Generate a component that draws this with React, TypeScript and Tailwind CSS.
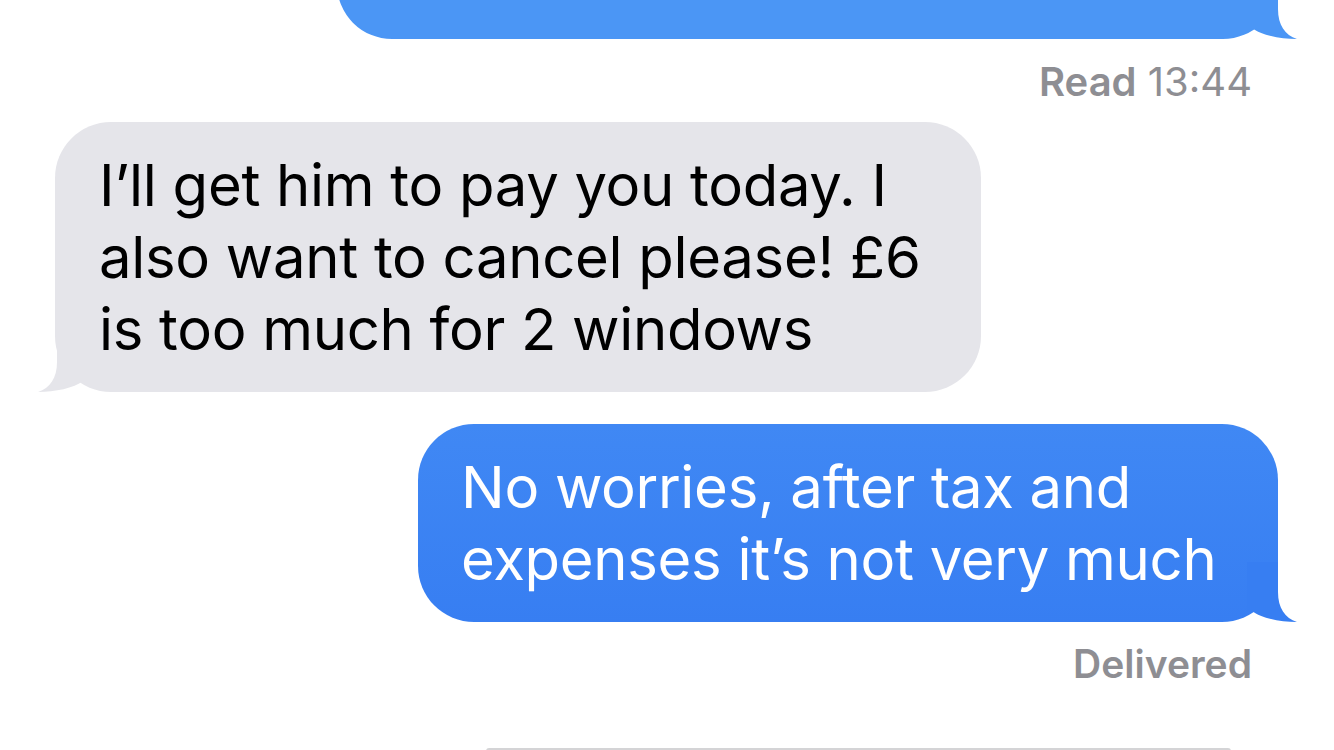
import React from 'react';

const TailRight = ({ color }: { color: string }) => (
    <svg className="absolute -right-[19px] bottom-0 h-[60px] w-[50px]" viewBox="0 0 50 60">
        <path d="M31 0 L31 30 C31 46 38 56 50 60 C33 60 14 56 5 49 L0 49 L0 0 Z" fill={color} />
    </svg>
);

const TailLeft = ({ color }: { color: string }) => (
    <svg className="absolute -left-[17px] bottom-0 h-[60px] w-[50px]" viewBox="0 0 50 60">
        <path d="M19 0 L19 30 C19 46 12 56 0 60 C17 60 36 56 45 49 L50 49 L50 0 Z" fill={color} />
    </svg>
);

export default function App() {
    return (
        <div className="h-[750px] w-[1334px] overflow-hidden bg-white [font-family:Inter,'Noto_Sans',sans-serif]">
            <div className="flex flex-col pl-[55px] pr-[56px]">
                {/* previous message, cut off at the top */}
                <div className="relative -mt-[101px] h-[140px] w-[941px] self-end rounded-[55px] bg-[#4b96f5]">
                    <TailRight color="#4b96f5" />
                </div>

                <div className="mr-[26px] mt-[19px] self-end text-[40px] leading-[48px] text-[#8e8e93]">
                    <span className="font-semibold">Read</span> 13:44
                </div>

                <div className="relative mt-[16px] w-[926px] self-start rounded-[56px] bg-[#e5e5ea] pb-[27px] pl-[44px] pt-[27px]">
                    <p className="whitespace-nowrap text-[58px] leading-[72px] tracking-[-0.3px] text-black">
                        I’ll get him to pay you today. I<br />
                        also want to cancel please! £6<br />
                        is too much for 2 windows
                    </p>
                    <TailLeft color="#e5e5ea" />
                </div>

                <div className="relative mt-[32px] w-[860px] self-end rounded-[56px] bg-gradient-to-b from-[#4088f4] to-[#377ef2] pb-[27px] pl-[43px] pt-[27px]">
                    <p className="whitespace-nowrap text-[58px] leading-[72px] tracking-[-0.3px] text-white">
                        No worries, after tax and<br />
                        expenses it’s not very much
                    </p>
                    <TailRight color="#377ef2" />
                </div>

                <div className="mr-[26px] mt-[18px] self-end text-[39px] font-semibold leading-[47px] text-[#8e8e93]">
                    Delivered
                </div>

                <div className="ml-[431px] mt-[61px] h-[3px] w-[745px] rounded-t-full bg-[#d4d4d6]" />
            </div>
        </div>
    );
}
